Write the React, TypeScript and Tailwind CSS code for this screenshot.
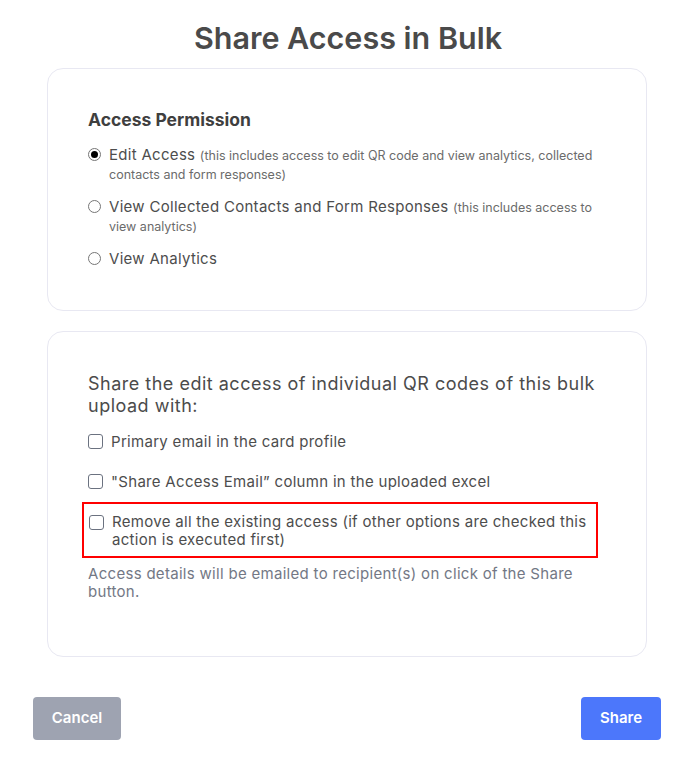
const Radio = ({ checked }: { checked?: boolean }) => (
  <span className="mt-[3px] flex h-[13px] w-[13px] shrink-0 items-center justify-center rounded-full border border-[#767676] bg-white">
    {checked && <span className="h-[7px] w-[7px] rounded-full bg-black" />}
  </span>
);

const Checkbox = () => (
  <span className="mt-[2px] h-[15px] w-[15px] shrink-0 rounded-[3px] border border-[#6b7280] bg-white" />
);

export default function App() {
  return (
    <div className="flex min-h-[760px] w-[696px] flex-col bg-white font-['Inter','Liberation_Sans',sans-serif] text-[#4d4d4d]">
      <h1 className="mt-[20px] text-center text-[30.5px] leading-[36px] font-semibold text-[#4a4a4a]">
        Share Access in Bulk
      </h1>

      <div className="mt-[12px] ml-[47px] flex w-[600px] flex-col rounded-2xl border border-[#e8e8f2] px-[40px] pt-[39px] pb-[42px]">
        <div className="text-[17.5px] leading-[24px] font-bold text-[#3f3f3f]">Access Permission</div>
        <div className="mt-[13px] flex flex-col gap-[14px]">
          <label className="flex gap-[8px]">
            <Radio checked />
            <span className="text-[15px] leading-[19px] tracking-[0.3px]">
              Edit Access{" "}
              <span className="text-[12.5px] leading-[14px] tracking-normal text-[#6b6b6b]">
                (this includes access to edit QR code and view analytics, collected contacts and form responses)
              </span>
            </span>
          </label>
          <label className="flex gap-[8px]">
            <Radio />
            <span className="text-[15px] leading-[19px] tracking-[0.3px]">
              View Collected Contacts and Form Responses{" "}
              <span className="text-[12.5px] leading-[14px] tracking-normal text-[#6b6b6b]">
                (this includes access to view analytics)
              </span>
            </span>
          </label>
          <label className="flex gap-[8px]">
            <Radio />
            <span className="text-[15px] leading-[19px] tracking-[0.3px]">View Analytics</span>
          </label>
        </div>
      </div>

      <div className="mt-[20px] ml-[47px] flex w-[600px] flex-col rounded-2xl border border-[#e8e8f2] px-[40px] pt-[41px] pb-[55px]">
        <div className="text-[18px] leading-[22px] tracking-[0.5px] text-[#4b4b4b]">
          Share the edit access of individual QR codes of this bulk upload with:
        </div>
        <div className="mt-[15px] flex flex-col gap-[21px]">
          <label className="flex gap-[8px]">
            <Checkbox />
            <span className="text-[15px] leading-[19px] tracking-[0.3px]">Primary email in the card profile</span>
          </label>
          <label className="flex gap-[8px]">
            <Checkbox />
            <span className="text-[15px] leading-[19px] tracking-[0.3px]">
              "Share Access Email” column in the uploaded excel
            </span>
          </label>
        </div>
        <label className="mt-[11px] -ml-[6px] flex w-[516px] gap-[8px] border-2 border-[#ff0000] pt-[9px] pr-[2px] pb-[7px] pl-[5px]">
          <Checkbox />
          <span className="text-[15px] leading-[18px] tracking-[0.3px]">
            Remove all the existing access (if other options are checked this action is executed first)
          </span>
        </label>
        <p className="mt-[7px] text-[15px] leading-[18px] tracking-[0.3px] text-[#737885]">
          Access details will be emailed to recipient(s) on click of the Share button.
        </p>
      </div>

      <div className="mt-[40px] mr-[35px] ml-[33px] flex justify-between">
        <button className="h-[43px] w-[88px] rounded-[4px] bg-[#9ea3b1] text-[15px] font-semibold text-white">
          Cancel
        </button>
        <button className="h-[43px] w-[80px] rounded-[4px] bg-[#4c77fb] text-[15px] font-semibold text-white">
          Share
        </button>
      </div>
    </div>
  );
}
